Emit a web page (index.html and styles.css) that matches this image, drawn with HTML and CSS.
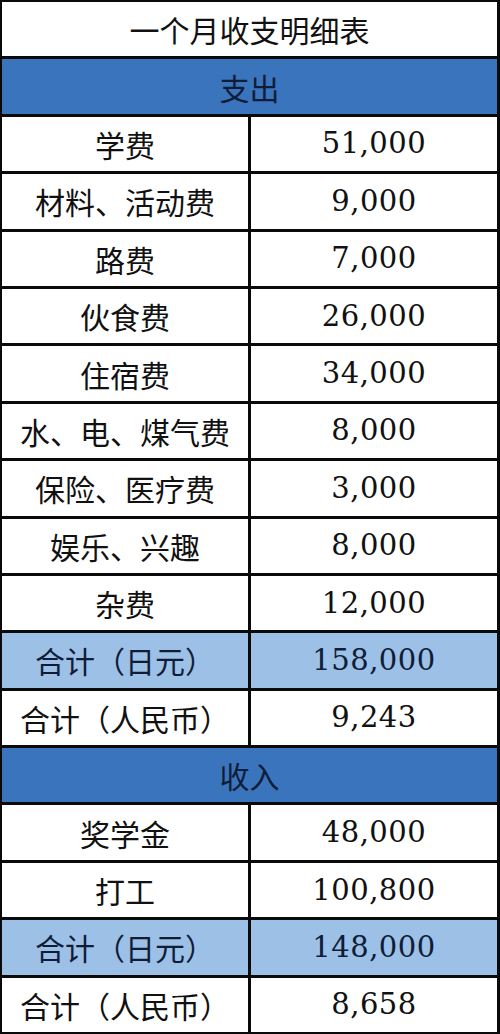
FILE: index.html
```html
<!DOCTYPE html>
<html lang="zh">
<head>
<meta charset="utf-8">
<link rel="stylesheet" href="styles.css">
</head>
<body>
<div class="table">
  <div class="cell full title">一个月收支明细表</div>
  <div class="cell full band">支出</div>
  <div class="cell">学费</div><div class="cell num">51,000</div>
  <div class="cell">材料、活动费</div><div class="cell num">9,000</div>
  <div class="cell">路费</div><div class="cell num">7,000</div>
  <div class="cell">伙食费</div><div class="cell num">26,000</div>
  <div class="cell">住宿费</div><div class="cell num">34,000</div>
  <div class="cell">水、电、煤气费</div><div class="cell num">8,000</div>
  <div class="cell">保险、医疗费</div><div class="cell num">3,000</div>
  <div class="cell">娱乐、兴趣</div><div class="cell num">8,000</div>
  <div class="cell">杂费</div><div class="cell num">12,000</div>
  <div class="cell light">合计（日元）</div><div class="cell num light">158,000</div>
  <div class="cell">合计（人民币）</div><div class="cell num">9,243</div>
  <div class="cell full band">收入</div>
  <div class="cell">奖学金</div><div class="cell num">48,000</div>
  <div class="cell">打工</div><div class="cell num">100,800</div>
  <div class="cell light">合计（日元）</div><div class="cell num light">148,000</div>
  <div class="cell">合计（人民币）</div><div class="cell num">8,658</div>
</div>
</body>
</html>
```
FILE: styles.css
```css
html, body {
  margin: 0;
  padding: 0;
  background: #ffffff;
}

.table {
  box-sizing: border-box;
  width: 500px;
  height: 1034px;
  display: grid;
  grid-template-columns: 1fr 1fr;
  grid-template-rows: repeat(18, 1fr);
  gap: 3px;
  padding: 2px 3px 2px 2px;
  background: #0a0a0a;
  font-family: "Noto Sans CJK SC", "Noto Sans CJK JP", sans-serif;
  font-size: 30px;
  color: #111111;
}

.cell {
  background: #ffffff;
  display: flex;
  align-items: center;
  justify-content: center;
  line-height: 1;
  white-space: nowrap;
}

.full {
  grid-column: 1 / -1;
}

.title {
  font-size: 30px;
}

.band {
  background: #3a74bd;
  color: #0f1d38;
}

.light {
  background: #9dc0e6;
  color: #0f1d38;
}

.num {
  font-family: "DejaVu Serif", "Liberation Serif", serif;
  font-size: 29px;
  letter-spacing: 0.5px;
}
```
